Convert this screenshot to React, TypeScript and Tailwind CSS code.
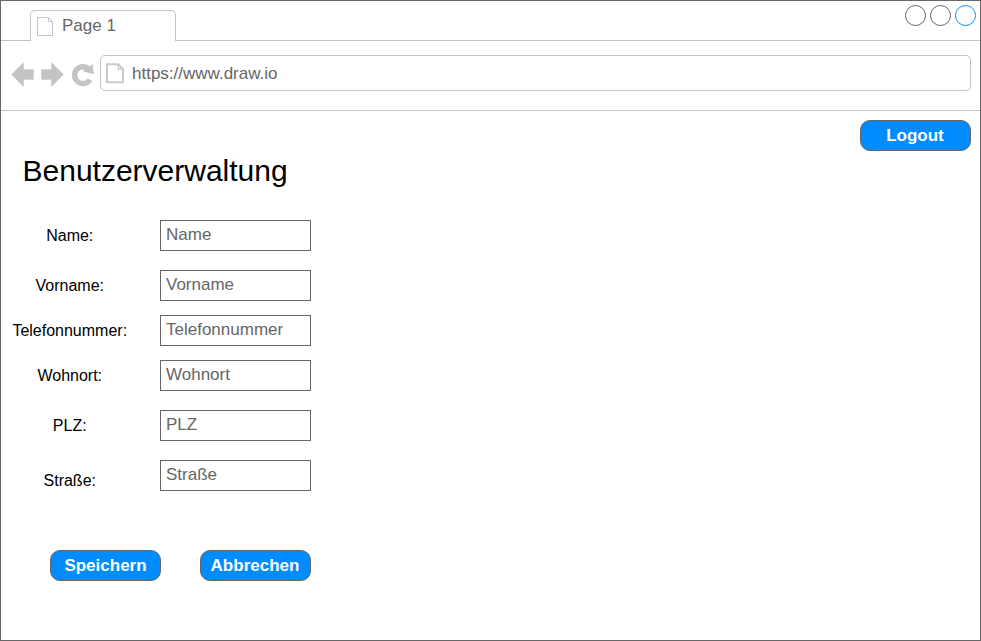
import React from "react";

const fields = [
  { name: "Name", gap: "mt-0", label: "pt-0" },
  { name: "Vorname", gap: "mt-[19px]", label: "pt-0" },
  { name: "Telefonnummer", gap: "mt-[14px]", label: "pt-0" },
  { name: "Wohnort", gap: "mt-[14px]", label: "pt-0" },
  { name: "PLZ", gap: "mt-[19px]", label: "pt-0" },
  { name: "Straße", gap: "mt-[19px]", label: "pt-[5px]" },
];

function Button({ children, pad = "pr-px" }: { children: React.ReactNode; pad?: string }) {
  return (
    <button
      className={`flex h-[31px] w-[111px] items-center justify-center whitespace-nowrap rounded-[10px] border border-[#666666] bg-[#008cff] text-[17px] leading-5 font-bold text-white ${pad}`}
    >
      {children}
    </button>
  );
}

function NavIcons() {
  return (
    <svg width="90" height="30" viewBox="10 60 90 30" className="shrink-0">
      <g fill="#c4c4c4" stroke="#c4c4c4" strokeOpacity="0.35" strokeWidth="1">
        <path d="M11.5 74.5 L23.5 62.5 V69.5 H33.5 V79.5 H23.5 V86.5 Z" />
        <path d="M63.5 74.5 L51.5 62.5 V69.5 H41.5 V79.5 H51.5 V86.5 Z" />
      </g>
      <path d="M90 79.8 A8.4 8.4 0 1 1 88.9 69.1" fill="none" stroke="#c4c4c4" strokeWidth="5.4" />
      <path d="M92.6 64 L93.8 74.2 L82.8 71.2 Z" fill="#c4c4c4" />
    </svg>
  );
}

export default function App() {
  return (
    <div className="flex h-[641px] w-[981px] flex-col border border-[#666666] bg-white font-['Liberation_Sans',Arial,sans-serif] text-black">
      <div className="flex h-10 shrink-0">
        <div className="w-[29px] border-b border-[#c4c4c4]" />
        <div className="mt-[9px] flex w-[146px] rounded-t-[5px] border border-b-0 border-[#c4c4c4] pl-[6px]">
          <svg width="17" height="20" viewBox="0 0 17 20" className="mt-[6px] shrink-0" fill="none" stroke="#c4c4c4">
            <path d="M0.5 0.5 H11.5 L15.5 4.5 V18.5 H0.5 Z M11.5 0.5 V4.5 H15.5" />
          </svg>
          <span className="mt-[5px] ml-[8px] text-[17px] leading-5 text-[#666666]">Page 1</span>
        </div>
        <div className="flex flex-1 justify-end gap-[4px] border-b border-[#c4c4c4] pt-[4px] pr-[4px]">
          <div className="size-[21px] rounded-full border border-[#666666]" />
          <div className="size-[21px] rounded-full border border-[#666666]" />
          <div className="size-[21px] rounded-full border border-[#008cff]" />
        </div>
      </div>

      <div className="flex h-[70px] shrink-0 items-start border-b border-[#c4c4c4] pt-[14px] pr-[9px] pl-[9px]">
        <div className="mt-[5px] flex">
          <NavIcons />
        </div>
        <div className="flex h-9 flex-1 rounded-[5px] border border-[#c4c4c4] pl-[5px]">
          <svg width="18" height="21" viewBox="0 0 18 21" className="mt-[7px] shrink-0" fill="none" stroke="#cacaca">
            <path strokeWidth="2" d="M1 1.2 H12.4 L17 5.8 V19.2 H1 Z" />
            <path strokeWidth="1.3" d="M12.3 1.2 V6 H17" />
          </svg>
          <span className="mt-[8px] ml-[8px] text-[17px] leading-5 text-[#666666]">https://www.draw.io</span>
        </div>
      </div>

      <div className="flex justify-end pt-[9px] pr-[9px]">
        <Button>Logout</Button>
      </div>
      <h1 className="mt-[2px] ml-[21.5px] h-9 text-[30px] leading-9">Benutzerverwaltung</h1>

      <form className="mt-[31px]">
        {fields.map((f) => (
          <div key={f.name} className={`flex h-[31px] ${f.gap}`}>
            <label className={`w-[137.5px] text-center text-[16px] leading-[31px] ${f.label}`}>{f.name}:</label>
            <input
              placeholder={f.name}
              className="ml-[21.5px] h-[31px] w-[151px] border border-[#666666] pb-[1px] pl-[5px] text-[17px] leading-5 placeholder:text-[#666666]"
            />
          </div>
        ))}
        <div className="mt-[59px] ml-[49px] flex gap-[39px]">
          <Button pad="pr-0">Speichern</Button>
          <Button>Abbrechen</Button>
        </div>
      </form>
    </div>
  );
}
